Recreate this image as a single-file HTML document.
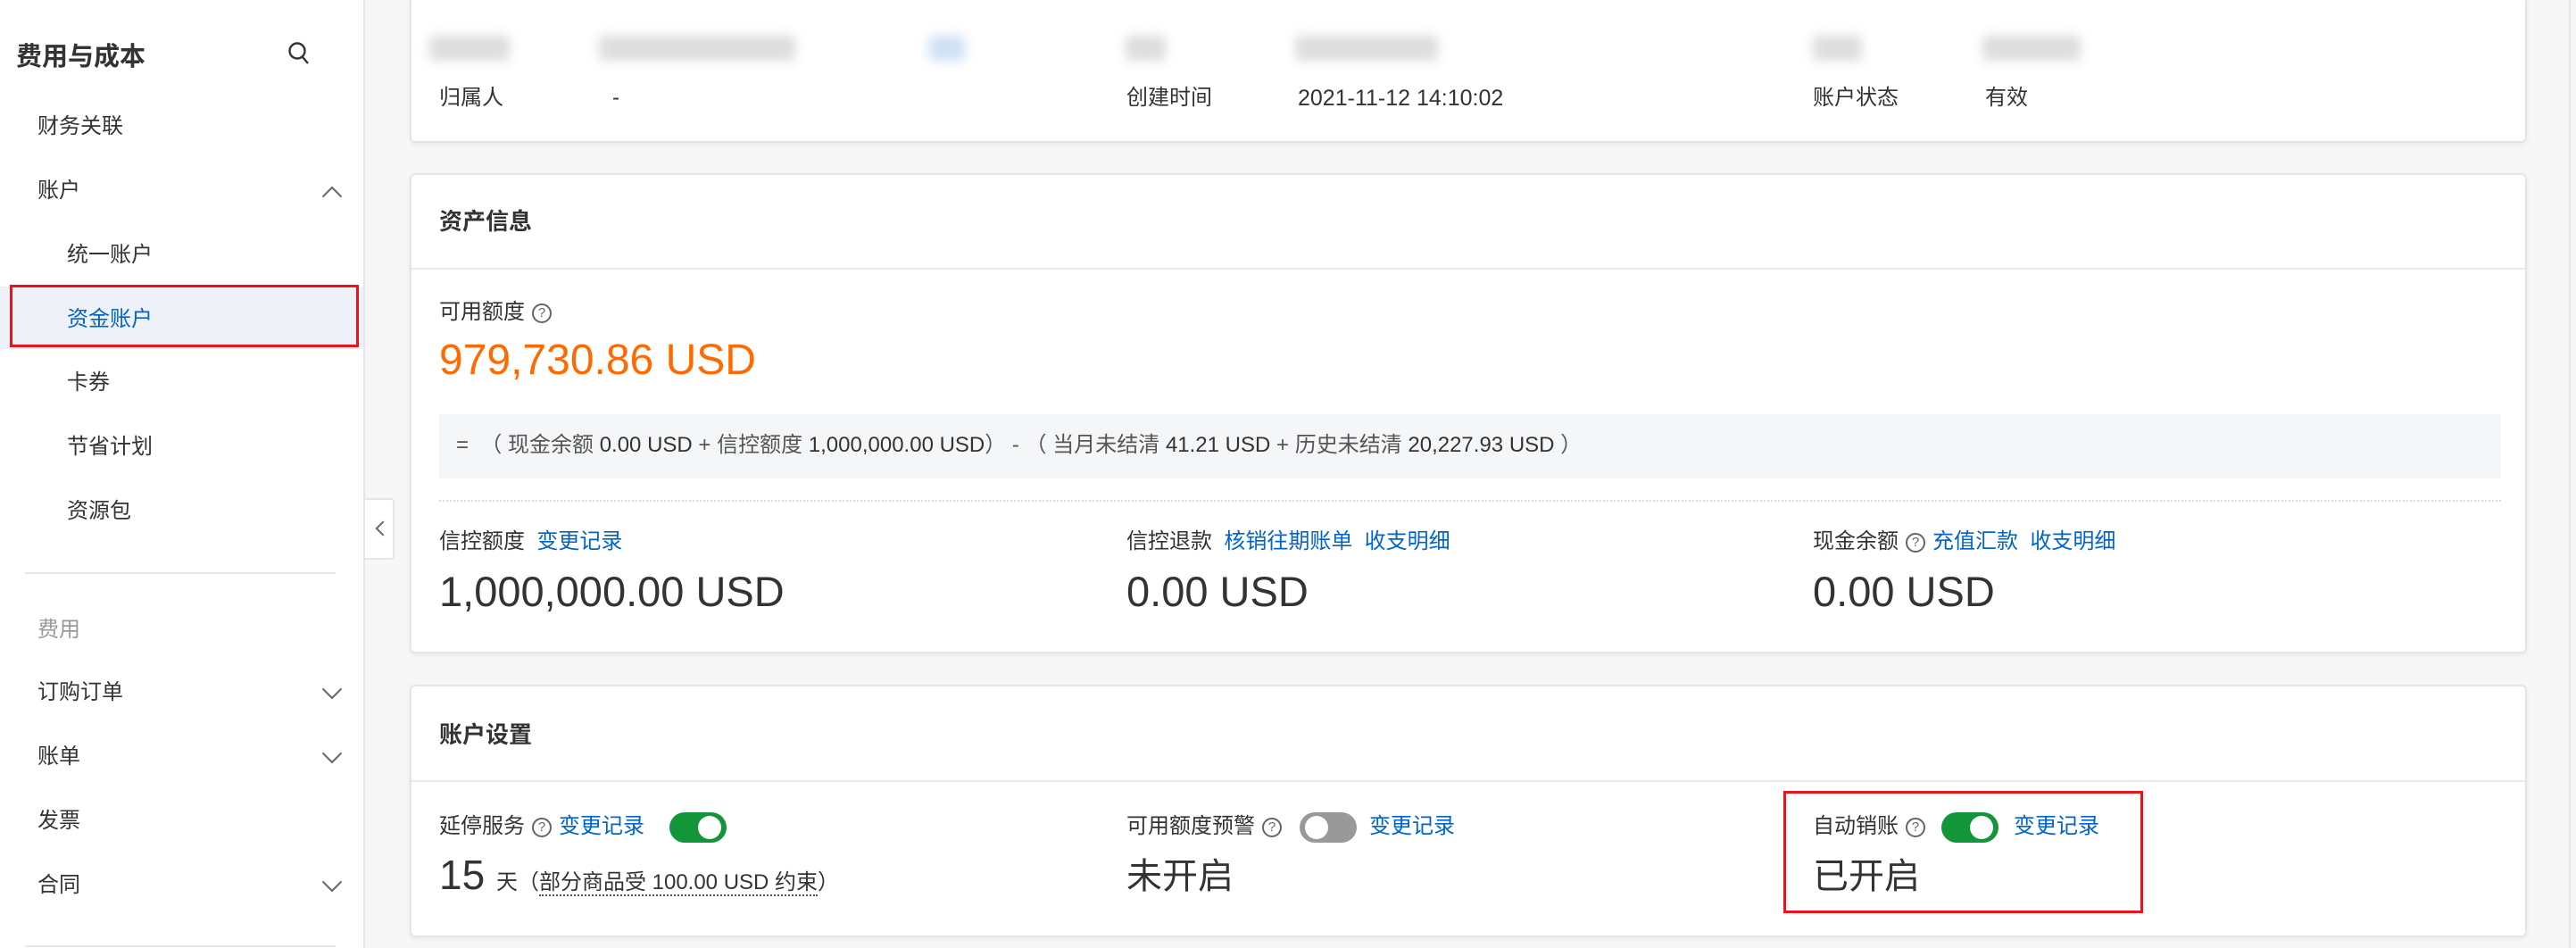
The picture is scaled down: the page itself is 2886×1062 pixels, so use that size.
<!DOCTYPE html>
<html><head><meta charset="utf-8"><style>
*{margin:0;padding:0;box-sizing:border-box}
body{width:2886px;height:1062px;overflow:hidden;background:#f7f7f8;font-family:"Liberation Sans","Noto Sans CJK SC",sans-serif;color:#333;position:relative}
.a{position:absolute;white-space:nowrap}
.side{position:absolute;left:0;top:0;width:409px;height:1062px;background:#fff;border-right:2px solid #e6e6e6}
.mi{position:absolute;font-size:24px;color:#333;line-height:30px}
.card{position:absolute;left:459px;width:2372px;background:#fff;border:2px solid #e5e5e8;border-radius:6px;box-shadow:0 2px 6px rgba(0,0,0,.06)}
.lab{font-size:24px;color:#333;line-height:30px}
.lk{color:#0064c8}
.big{font-size:47px;color:#333;line-height:54px}
.hd{font-size:26px;font-weight:bold;color:#333}
.q{display:inline-block;width:22px;height:22px;border:2px solid #666;border-radius:50%;font-size:15px;line-height:18px;text-align:center;color:#666;vertical-align:2px;margin:0 8px}
.tg{position:absolute;width:64px;height:34px;border-radius:17px;background:#13963a}
.tg i{position:absolute;top:4px;right:6px;width:26px;height:26px;border-radius:50%;background:#fff}
.tg.off{background:#999}.tg.off i{left:6px;right:auto}
.chev{position:absolute;width:16px;height:16px;border-left:2px solid #666;border-top:2px solid #666}
.blur{position:absolute;height:28px;background:#ddd;filter:blur(6px);border-radius:4px}
</style></head><body>
<div class="side">
<div class="a" style="left:18px;top:40px;font-size:29px;font-weight:bold;color:#333">费用与成本</div>
<svg class="a" style="left:322px;top:46px" width="26" height="28" viewBox="0 0 26 28"><circle cx="11" cy="11" r="8.5" fill="none" stroke="#333" stroke-width="2.4"/><path d="M17 18l6 7" stroke="#333" stroke-width="2.4"/></svg>
<div class="mi" style="left:42px;top:127px">财务关联</div>
<div class="mi" style="left:42px;top:199px">账户</div>
<div class="chev" style="left:364px;top:212px;transform:rotate(45deg)"></div>
<div class="mi" style="left:75px;top:271px">统一账户</div>
<div class="a" style="left:0;top:321px;width:407px;height:70px;background:#eef1f8"></div>
<div class="a" style="left:11px;top:319px;width:391px;height:70px;border:3px solid #e8141c"></div>
<div class="mi" style="left:75px;top:343px;color:#0064c8">资金账户</div>
<div class="mi" style="left:75px;top:414px">卡券</div>
<div class="mi" style="left:75px;top:486px">节省计划</div>
<div class="mi" style="left:75px;top:558px">资源包</div>
<div class="a" style="left:28px;top:641px;width:348px;height:2px;background:#e6e6e6"></div>
<div class="mi" style="left:42px;top:691px;color:#999">费用</div>
<div class="mi" style="left:42px;top:761px">订购订单</div>
<div class="chev" style="left:364px;top:764px;transform:rotate(-135deg)"></div>
<div class="mi" style="left:42px;top:833px">账单</div>
<div class="chev" style="left:364px;top:836px;transform:rotate(-135deg)"></div>
<div class="mi" style="left:42px;top:905px">发票</div>
<div class="mi" style="left:42px;top:977px">合同</div>
<div class="chev" style="left:364px;top:980px;transform:rotate(-135deg)"></div>
<div class="a" style="left:28px;top:1059px;width:348px;height:2px;background:#e6e6e6"></div>
</div>
<div class="a" style="left:409px;top:558px;width:33px;height:69px;background:#fff;border:2px solid #e5e5e5;border-left:none;border-radius:0 4px 4px 0"></div>
<div class="chev" style="left:423px;top:586px;width:12px;height:12px;transform:rotate(-45deg)"></div>
<div class="a" style="left:2878px;top:0;width:2px;height:1062px;background:#e5e5e5"></div>

<div class="card" style="top:-6px;height:166px">
<div class="blur" style="left:20px;top:44px;width:90px"></div>
<div class="blur" style="left:210px;top:44px;width:220px"></div>
<div class="blur" style="left:580px;top:44px;width:40px;background:#cfe0f5"></div>
<div class="blur" style="left:800px;top:44px;width:45px"></div>
<div class="blur" style="left:990px;top:44px;width:160px"></div>
<div class="blur" style="left:1570px;top:44px;width:55px"></div>
<div class="blur" style="left:1760px;top:44px;width:110px"></div>
<div class="a lab" style="left:31px;top:99px">归属人</div>
<div class="a lab" style="left:225px;top:99px">-</div>
<div class="a lab" style="left:801px;top:99px">创建时间</div>
<div class="a lab" style="left:993px;top:99px;font-size:25px">2021-11-12 14:10:02</div>
<div class="a lab" style="left:1570px;top:99px">账户状态</div>
<div class="a lab" style="left:1763px;top:99px">有效</div>
</div>

<div class="card" style="top:194px;height:538px">
<div class="a hd" style="left:31px;top:32px">资产信息</div>
<div class="a" style="left:0;top:104px;width:2368px;height:2px;background:#e8e8ea"></div>
<div class="a lab" style="left:31px;top:139px">可用额度<span class="q">?</span></div>
<div class="a" style="left:31px;top:181px;font-size:48px;color:#ff6a00;line-height:54px">979,730.86 USD</div>
<div class="a" style="left:31px;top:268px;width:2310px;height:72px;background:#f5f6f8"></div>
<div class="a" style="left:50px;top:288px;font-size:24px;color:#555;line-height:30px">=&nbsp; （ 现金余额 <span style="color:#333">0.00 USD</span> + 信控额度 <span style="color:#333">1,000,000.00 USD</span>） - （ 当月未结清 <span style="color:#333">41.21 USD</span> + 历史未结清 <span style="color:#333">20,227.93 USD</span> ）</div>
<div class="a" style="left:31px;top:364px;width:2310px;border-top:2px dotted #ddd"></div>
<div class="a lab" style="left:31px;top:396px">信控额度 &nbsp;<span class="lk">变更记录</span></div>
<div class="a big" style="left:31px;top:440px">1,000,000.00 USD</div>
<div class="a lab" style="left:801px;top:396px">信控退款 &nbsp;<span class="lk">核销往期账单 &nbsp;收支明细</span></div>
<div class="a big" style="left:801px;top:440px">0.00 USD</div>
<div class="a lab" style="left:1570px;top:396px">现金余额<span class="q">?</span><span class="lk">充值汇款 &nbsp;收支明细</span></div>
<div class="a big" style="left:1570px;top:440px">0.00 USD</div>
</div>

<div class="card" style="top:767px;height:283px">
<div class="a hd" style="left:31px;top:34px">账户设置</div>
<div class="a" style="left:0;top:105px;width:2368px;height:2px;background:#e8e8ea"></div>
<div class="a lab" style="left:31px;top:142px">延停服务<span class="q">?</span><span class="lk">变更记录</span></div>
<div class="tg" style="left:289px;top:141px"><i></i></div>
<div class="a" style="left:31px;top:183px;font-size:46px;line-height:56px">15 <span style="font-size:24px">天（<span style="border-bottom:2px dotted #555">部分商品受 100.00 USD 约束</span>）</span></div>
<div class="a lab" style="left:801px;top:142px">可用额度预警<span class="q">?</span></div>
<div class="tg off" style="left:995px;top:141px"><i></i></div>
<div class="a lab lk" style="left:1073px;top:142px">变更记录</div>
<div class="a" style="left:801px;top:185px;font-size:40px;line-height:56px">未开启</div>
<div class="a lab" style="left:1570px;top:142px">自动销账<span class="q">?</span></div>
<div class="tg" style="left:1714px;top:141px"><i></i></div>
<div class="a lab lk" style="left:1795px;top:142px">变更记录</div>
<div class="a" style="left:1570px;top:185px;font-size:40px;line-height:56px">已开启</div>
</div>
<div class="a" style="left:1998px;top:886px;width:403px;height:137px;border:3px solid #e8141c"></div>
</body></html>
